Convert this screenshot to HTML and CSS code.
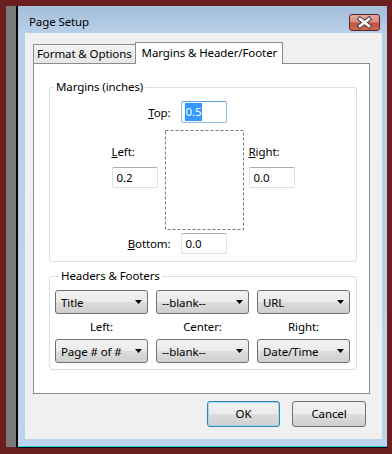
FILE: index.html
```html
<!doctype html>
<html lang=en>
	<head>
		<meta charset=utf-8>
		<title>Page Setup</title>
		<link rel="stylesheet" href="styles.css">
	</head>
	<body>
		<div class="desktop">
			<div class="behind"></div>
			<div class="window">
				<div class="titlebar">
					<span class="title">Page Setup</span>
					<div class="close">
						<svg width="31" height="17" viewBox="0 0 31 17">
							<path d="M11 5 L20 12 M20 5 L11 12" stroke="#4b3c42" stroke-width="4.6" stroke-linecap="square" fill="none"/>
							<path d="M11 5 L20 12 M20 5 L11 12" stroke="#ffffff" stroke-width="2.6" stroke-linecap="square" fill="none"/>
						</svg>
					</div>
				</div>
				<div class="dialog">
					<div class="tabs">
						<div class="tab">Format &amp; Options</div>
						<div class="tab active">Margins &amp; Header/Footer</div>
					</div>
					<div class="panel">
						<fieldset class="group margins">
							<legend>Margins (inches)</legend>
							<div class="margin-grid">
								<div class="edge-row top-row">
									<span class="label"><u>T</u>op:</span>
									<div class="field focused"><span class="selected">0.5</span></div>
								</div>
								<div class="side left-side">
									<span class="label"><u>L</u>eft:</span>
									<div class="field">0.2</div>
								</div>
								<div class="page">
									<svg width="79" height="100" viewBox="0 0 79 100">
										<rect x="0.5" y="0.5" width="78" height="99" fill="none" stroke="#7a7a7a" stroke-dasharray="3 2"/>
									</svg>
								</div>
								<div class="side right-side">
									<span class="label"><u>R</u>ight:</span>
									<div class="field">0.0</div>
								</div>
								<div class="edge-row bottom-row">
									<span class="label"><u>B</u>ottom:</span>
									<div class="field">0.0</div>
								</div>
							</div>
						</fieldset>
						<fieldset class="group headers">
							<legend>Headers &amp; Footers</legend>
							<div class="hf-grid">
								<div class="combo">Title<svg width="7" height="4"><polygon points="0,0 7,0 3.5,4" fill="#000"/></svg></div>
								<div class="combo">--blank--<svg width="7" height="4"><polygon points="0,0 7,0 3.5,4" fill="#000"/></svg></div>
								<div class="combo">URL<svg width="7" height="4"><polygon points="0,0 7,0 3.5,4" fill="#000"/></svg></div>
								<div class="caption">Left:</div>
								<div class="caption">Center:</div>
								<div class="caption">Right:</div>
								<div class="combo">Page # of #<svg width="7" height="4"><polygon points="0,0 7,0 3.5,4" fill="#000"/></svg></div>
								<div class="combo">--blank--<svg width="7" height="4"><polygon points="0,0 7,0 3.5,4" fill="#000"/></svg></div>
								<div class="combo">Date/Time<svg width="7" height="4"><polygon points="0,0 7,0 3.5,4" fill="#000"/></svg></div>
							</div>
						</fieldset>
					</div>
					<div class="actions">
						<div class="btn default">OK</div>
						<div class="btn cancel">Cancel</div>
					</div>
				</div>
			</div>
		</div>
	</body>
</html>
```

FILE: styles.css
```css
*
{
	box-sizing: border-box;
}

body
{
	margin: 0px;
	padding: 0px;
	color: #000;
	background-color: #6c1f21;
	font-family: 'Noto Sans', 'Open Sans', sans-serif;
	font-size: 11.5px;
	letter-spacing: -0.1px;
}

.desktop
{
	display: flex;
	padding: 6px 0px 0px 6px;
}

.behind
{
	width: 10px;
	height: 441px;
	background-color: #7a7a7a;
}

.window
{
	display: flex;
	flex-direction: column;
	width: 371px;
	height: 442px;
	border-left: 2px solid #000;
	border-bottom: 1px solid #000;
	background: linear-gradient(#a3bedb, #b8cfe8 27px, #bcd4ec);
	box-shadow: inset 0px -1px #3ac4ec;
}

/* title bar */

.titlebar
{
	display: flex;
	align-items: flex-start;
	height: 27px;
	padding: 8px 7px 0px 11px;
}

.title
{
	line-height: 16px;
}

.close
{
	margin-left: auto;
	width: 31px;
	height: 17px;
	border: 1px solid #5e2327;
	border-radius: 3px;
	background: linear-gradient(#e6aba2, #d88d82 45%, #c4503f 55%, #cf6a55);
}

.close svg
{
	display: block;
	margin: -1px;
}

/* dialog body */

.dialog
{
	display: flex;
	flex-direction: column;
	height: 406px;
	margin: 0px 5px 0px 7px;
	padding: 9px 12px 0px 8px;
	background-color: #f0f0f0;
}

.tabs
{
	display: flex;
	align-items: flex-end;
	height: 21px;
}

.tab
{
	height: 19px;
	padding: 0px 3px;
	line-height: 18px;
	border: 1px solid #898c95;
	border-bottom: none;
	border-right: none;
	background: linear-gradient(#f3f3f3, #e6e6e6);
}

.tab.active
{
	position: relative;
	height: 22px;
	margin-bottom: -1px;
	padding: 0px 5px 0px 6px;
	line-height: 19px;
	border-right: 1px solid #898c95;
	background: #fff;
}

.panel
{
	height: 331px;
	border: 1px solid #898c95;
	background-color: #fff;
}

/* group boxes */

.group
{
	width: 308px;
	margin: 0px 0px 0px 15px;
	padding: 0px;
	min-inline-size: 0;
	border: 1px solid #d5dfe5;
	border-radius: 3px;
}

.group legend
{
	margin-left: 4px;
	padding: 0px 2px;
	line-height: 16px;
}

.margins
{
	margin-top: 15px;
	padding: 6px 0px 7px 0px;
}

.headers
{
	margin-top: 6px;
	padding: 6px 6px 6px 5px;
}

.margin-grid
{
	display: grid;
	justify-content: center;
	grid-template-columns: 46px 7px 79px 5px 46px;
	grid-template-rows: 22px 7px 100px 3px 21px;
}

.edge-row
{
	display: flex;
	align-items: center;
	justify-content: flex-end;
	grid-column: 1 / 4;
}

.top-row
{
	grid-row: 1;
}

.bottom-row
{
	grid-row: 5;
}

.edge-row .label
{
	margin-right: 10px;
}

.edge-row .field
{
	margin-right: 17px;
}

.side
{
	display: flex;
	flex-direction: column;
	gap: 7px;
	grid-row: 3;
	padding-top: 14px;
}

.side .label
{
	line-height: 16px;
}

.left-side
{
	grid-column: 1;
}

.right-side
{
	grid-column: 5;
}

.page
{
	grid-column: 3;
	grid-row: 3;
}

.page svg
{
	display: block;
}

.field
{
	width: 46px;
	height: 21px;
	padding-left: 4px;
	line-height: 19px;
	border: 1px solid #dbdfe6;
	border-top-color: #abadb3;
	border-radius: 2px;
	background-color: #fff;
}

.field.focused
{
	height: 22px;
	padding-left: 3px;
	line-height: 20px;
	border-color: #8fbce6;
	border-top-color: #5e9fd8;
}

.selected
{
	display: inline-block;
	padding: 0px 1px;
	line-height: 18px;
	color: #fff;
	background-color: #3399ff;
}

/* headers & footers */

.hf-grid
{
	display: grid;
	grid-template-columns: repeat(3, 1fr);
	grid-template-rows: 24px 25px 24px;
	column-gap: 8px;
}

.combo
{
	display: flex;
	align-items: center;
	justify-content: space-between;
	padding: 0px 5px 0px 5px;
	border: 1px solid #707070;
	border-radius: 3px;
	background: linear-gradient(#f2f2f2, #ebebeb 50%, #dddddd 50%, #cfcfcf);
}

.combo svg
{
	display: block;
}

.caption
{
	line-height: 25px;
	text-align: center;
}

/* buttons */

.actions
{
	display: flex;
	justify-content: flex-end;
	gap: 12px;
	margin: 7px 4px 0px 0px;
}

.btn
{
	width: 73px;
	height: 26px;
	line-height: 24px;
	text-align: center;
	border: 1px solid #707070;
	border-radius: 3px;
	background: linear-gradient(#f2f2f2, #ebebeb 50%, #dddddd 50%, #cfcfcf);
}

.btn.default
{
	border-color: #3c7fb1;
	box-shadow: inset 0px 0px 0px 1px #9fdcf3;
}

.btn.cancel
{
	width: 74px;
}
```
